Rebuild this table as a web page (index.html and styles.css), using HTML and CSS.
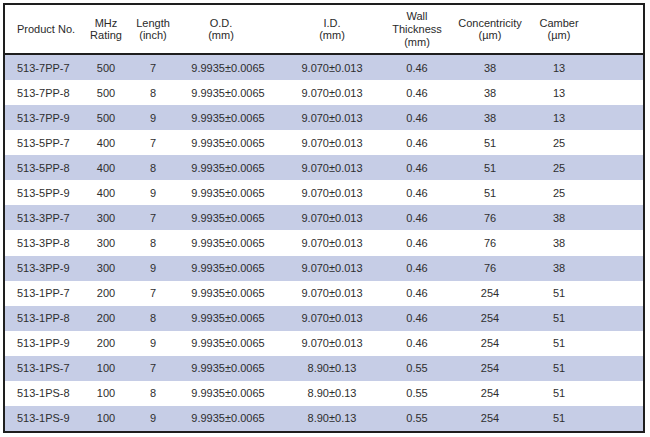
FILE: index.html
```html
<!DOCTYPE html>
<html>
<head>
<meta charset="utf-8">
<link rel="stylesheet" href="styles.css">
</head>
<body>
<div class="page">
<table class="spec">
  <colgroup>
    <col class="c-prod"><col class="c-mhz"><col class="c-len"><col class="c-od"><col class="c-id"><col class="c-wall"><col class="c-conc"><col class="c-camb"><col class="c-empty">
  </colgroup>
  <thead>
    <tr>
      <th class="prod">Product No.</th>
      <th>MHz<br>Rating</th>
      <th>Length<br>(inch)</th>
      <th class="od">O.D.<br>(mm)</th>
      <th>I.D.<br>(mm)</th>
      <th class="three">Wall<br>Thickness<br>(mm)</th>
      <th>Concentricity<br>(µm)</th>
      <th>Camber<br>(µm)</th>
      <th></th>
    </tr>
  </thead>
  <tbody>
    <tr><td class="prod">513-7PP-7</td><td>500</td><td>7</td><td>9.9935±0.0065</td><td>9.070±0.013</td><td>0.46</td><td>38</td><td>13</td><td></td></tr>
    <tr><td class="prod">513-7PP-8</td><td>500</td><td>8</td><td>9.9935±0.0065</td><td>9.070±0.013</td><td>0.46</td><td>38</td><td>13</td><td></td></tr>
    <tr><td class="prod">513-7PP-9</td><td>500</td><td>9</td><td>9.9935±0.0065</td><td>9.070±0.013</td><td>0.46</td><td>38</td><td>13</td><td></td></tr>
    <tr><td class="prod">513-5PP-7</td><td>400</td><td>7</td><td>9.9935±0.0065</td><td>9.070±0.013</td><td>0.46</td><td>51</td><td>25</td><td></td></tr>
    <tr><td class="prod">513-5PP-8</td><td>400</td><td>8</td><td>9.9935±0.0065</td><td>9.070±0.013</td><td>0.46</td><td>51</td><td>25</td><td></td></tr>
    <tr><td class="prod">513-5PP-9</td><td>400</td><td>9</td><td>9.9935±0.0065</td><td>9.070±0.013</td><td>0.46</td><td>51</td><td>25</td><td></td></tr>
    <tr><td class="prod">513-3PP-7</td><td>300</td><td>7</td><td>9.9935±0.0065</td><td>9.070±0.013</td><td>0.46</td><td>76</td><td>38</td><td></td></tr>
    <tr><td class="prod">513-3PP-8</td><td>300</td><td>8</td><td>9.9935±0.0065</td><td>9.070±0.013</td><td>0.46</td><td>76</td><td>38</td><td></td></tr>
    <tr><td class="prod">513-3PP-9</td><td>300</td><td>9</td><td>9.9935±0.0065</td><td>9.070±0.013</td><td>0.46</td><td>76</td><td>38</td><td></td></tr>
    <tr><td class="prod">513-1PP-7</td><td>200</td><td>7</td><td>9.9935±0.0065</td><td>9.070±0.013</td><td>0.46</td><td>254</td><td>51</td><td></td></tr>
    <tr><td class="prod">513-1PP-8</td><td>200</td><td>8</td><td>9.9935±0.0065</td><td>9.070±0.013</td><td>0.46</td><td>254</td><td>51</td><td></td></tr>
    <tr><td class="prod">513-1PP-9</td><td>200</td><td>9</td><td>9.9935±0.0065</td><td>9.070±0.013</td><td>0.46</td><td>254</td><td>51</td><td></td></tr>
    <tr><td class="prod">513-1PS-7</td><td>100</td><td>7</td><td>9.9935±0.0065</td><td>8.90±0.13</td><td>0.55</td><td>254</td><td>51</td><td></td></tr>
    <tr><td class="prod">513-1PS-8</td><td>100</td><td>8</td><td>9.9935±0.0065</td><td>8.90±0.13</td><td>0.55</td><td>254</td><td>51</td><td></td></tr>
    <tr><td class="prod">513-1PS-9</td><td>100</td><td>9</td><td>9.9935±0.0065</td><td>8.90±0.13</td><td>0.55</td><td>254</td><td>51</td><td></td></tr>
  </tbody>
</table>
</div>
</body>
</html>
```

FILE: styles.css
```css
html, body {
  margin: 0;
  padding: 0;
  background: #ffffff;
}

.page {
  padding: 3px 0 0 3px;
}

.spec {
  width: 642px;
  table-layout: fixed;
  border-collapse: separate;
  border-spacing: 0;
  border: 2px solid #1e1e1e;
  font-family: "Liberation Sans", Arial, sans-serif;
  font-size: 11px;
  color: #2e2e2e;
}

.c-prod { width: 79px; }
.c-mhz { width: 44px; }
.c-len { width: 50px; }
.c-od { width: 100px; }
.c-id { width: 108px; }
.c-wall { width: 62px; }
.c-conc { width: 84px; }
.c-camb { width: 54px; }
.c-empty { width: 57px; }

.spec th {
  height: 48px;
  padding: 0;
  font-weight: normal;
  line-height: 12px;
  text-align: center;
  vertical-align: middle;
  border-bottom: 2px solid #1e1e1e;
  background: #ffffff;
  color: #2a2a2a;
}

.spec th.three {
  line-height: 13px;
}

.spec th.od {
  padding-right: 14px;
}

.spec td {
  height: 25.07px;
  padding: 0;
  text-align: center;
  vertical-align: middle;
  white-space: nowrap;
}

.spec .prod {
  text-align: left;
  padding-left: 12px;
}

.spec tbody tr:nth-child(odd) td {
  background: #c6cde6;
}

.spec tbody tr:nth-child(even) td {
  background: #ffffff;
}
```
